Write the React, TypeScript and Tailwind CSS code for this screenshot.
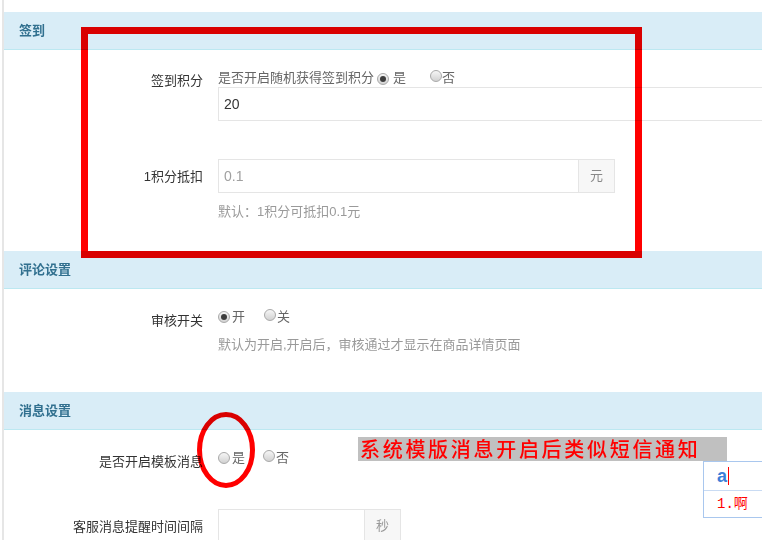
import React from "react";

const Radio = ({ checked }: { checked?: boolean }) => (
  <span className="inline-flex w-[12px] h-[12px] rounded-full border border-[#a9a9a9] bg-linear-to-b from-[#f6f6f6] to-[#d2d2d2] items-center justify-center shrink-0">
    {checked && <span className="w-[6px] h-[6px] rounded-full bg-[#3d3d3d]" />}
  </span>
);

const Heading = ({ children }: { children: React.ReactNode }) => (
  <div className="h-[38px] bg-[#d9edf7] border-b border-[#bce8f1] pl-[15px] flex items-center text-[13px] font-bold text-[#31708f]">
    {children}
  </div>
);

const Label = ({ children, className = "" }: { children: React.ReactNode; className?: string }) => (
  <div className={"w-[199px] shrink-0 text-right text-[13px] leading-[17px] text-[#333] " + className}>{children}</div>
);

export default function App() {
  return (
    <div className="relative w-[762px] h-[540px] overflow-hidden bg-white font-['Liberation_Sans','Noto_Sans_CJK_SC',sans-serif]">
      <div className="ml-[2px] border-l-[2px] border-[#e6e6e6] h-full pt-[12px] w-[820px]">
        <Heading>签到</Heading>
        <div className="h-[201px] pt-[19px]">
          <div className="flex">
            <Label className="pt-[3px]">签到积分</Label>
            <div className="ml-[15px] flex-1">
              <div className="h-[17px] flex items-center text-[13px] leading-[17px] text-[#666]">
                <span>是否开启随机获得签到积分</span>
                <span className="ml-[3px]"><Radio checked /></span>
                <span className="ml-[4px]">是</span>
                <span className="ml-[24px]"><Radio /></span>
                <span>否</span>
              </div>
              <div className="mt-[1px] h-[34px] border border-[#e5e5e5] flex items-center pl-[5px] text-[14px] text-[#333]">20</div>
            </div>
          </div>
          <div className="flex items-center mt-[38px]">
            <Label>1积分抵扣</Label>
            <div className="ml-[15px] flex h-[34px]">
              <div className="w-[361px] h-full border border-[#e5e5e5] flex items-center pl-[5px] text-[14px] text-[#a0a0a0]">0.1</div>
              <div className="w-[36px] h-full border border-l-0 border-[#e5e5e5] bg-[#f7f7f7] flex items-center justify-center text-[13px] text-[#888]">元</div>
            </div>
          </div>
          <div className="ml-[214px] mt-[10px] text-[13px] leading-[18px] text-[#9a9a9a]">默认：1积分可抵扣0.1元</div>
        </div>

        <Heading>评论设置</Heading>
        <div className="h-[103px] pt-[19px]">
          <div className="flex">
            <Label className="pt-[4px]">审核开关</Label>
            <div className="ml-[15px] flex-1">
              <div className="h-[17px] flex items-center text-[13px] leading-[17px] text-[#666]">
                <Radio checked />
                <span className="ml-[2px]">开</span>
                <span className="ml-[19px]"><Radio /></span>
                <span className="ml-[1px]">关</span>
              </div>
              <div className="mt-[11px] text-[13px] leading-[18px] text-[#9a9a9a]">默认为开启,开启后，审核通过才显示在商品详情页面</div>
            </div>
          </div>
        </div>

        <Heading>消息设置</Heading>
        <div className="pt-[19px]">
          <div className="flex">
            <Label className="pt-[4px]">是否开启模板消息</Label>
            <div className="ml-[15px] flex-1">
              <div className="h-[17px] flex items-center text-[13px] leading-[17px] text-[#666]">
                <Radio />
                <span className="ml-[2px]">是</span>
                <span className="ml-[18px]"><Radio /></span>
                <span className="ml-[1px]">否</span>
              </div>
            </div>
          </div>
          <div className="flex items-center mt-[39px]">
            <Label>客服消息提醒时间间隔</Label>
            <div className="ml-[15px] flex h-[34px]">
              <div className="w-[147px] h-full border border-[#e5e5e5]" />
              <div className="w-[36px] h-full border border-l-0 border-[#e5e5e5] bg-[#f7f7f7] flex items-center justify-center text-[13px] text-[#999]">秒</div>
            </div>
          </div>
        </div>
      </div>

      {/* red annotation rectangle */}
      <div className="absolute left-[81px] top-[27px] w-[561px] h-[231px] border-[7px] border-[#ff0000] mix-blend-multiply pointer-events-none" />

      {/* red ellipse */}
      <svg className="absolute left-[197px] top-[412px] mix-blend-multiply pointer-events-none" width="58" height="76" viewBox="0 0 58 76">
        <ellipse cx="29" cy="38" rx="26.5" ry="35.5" fill="none" stroke="#ff0000" strokeWidth="5" />
      </svg>

      {/* gray banner */}
      <div className="absolute left-[358px] top-[437px] w-[369px] h-[24px] bg-[#c0c0c0] flex items-center pl-[2px] text-[20px] leading-[24px] tracking-[2.7px] font-medium text-[#ff0000] whitespace-nowrap font-['Noto_Sans_CJK_SC',sans-serif]">
        系统模版消息开启后类似短信通知
      </div>

      {/* IME popup */}
      <div className="absolute left-[703px] top-[461px] w-[80px] h-[57px] border border-[#a9c7ee] bg-white">
        <div className="h-[29px] border-b border-[#c9dbf3] flex items-center pl-[13px]">
          <span className="text-[18px] font-bold text-[#3c7fd8] leading-none">a</span>
          <span className="ml-[1px] w-[1px] h-[18px] bg-[#ff0000]" />
        </div>
        <div className="h-[26px] flex items-center pl-[13px] text-[14px] text-[#ff0000] font-['Liberation_Mono','Noto_Sans_CJK_SC',monospace]">
          1.啊
        </div>
      </div>
    </div>
  );
}
